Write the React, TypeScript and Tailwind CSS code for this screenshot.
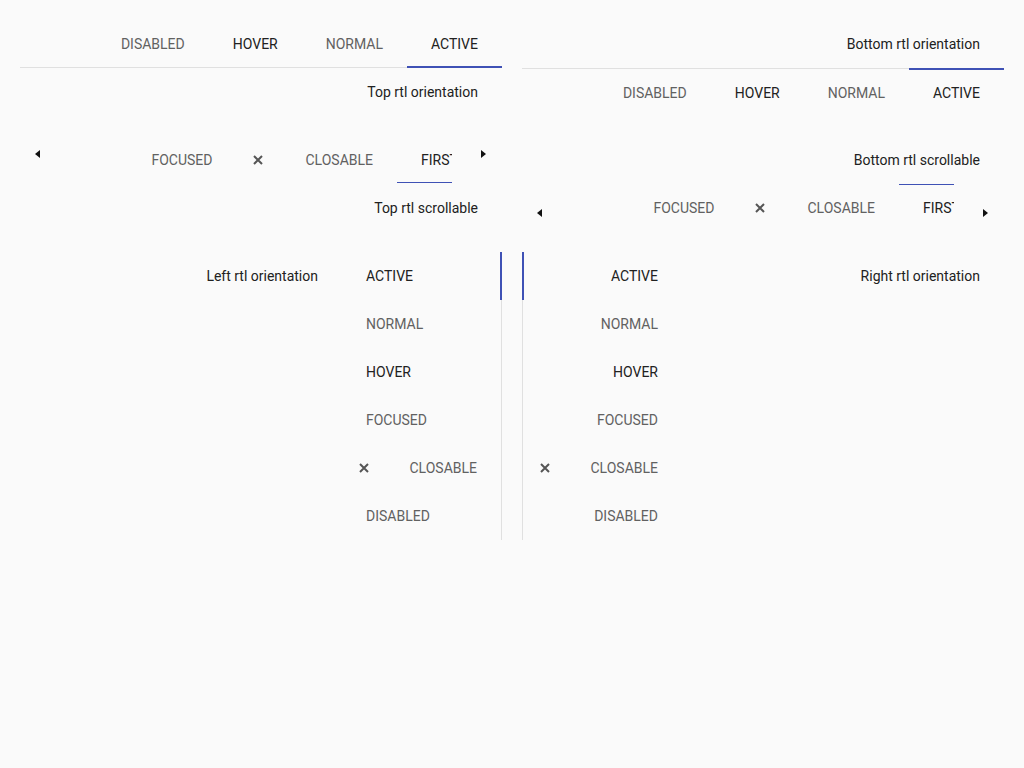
import React from "react";

type Kind = "active" | "hover" | "normal" | "disabled" | "focused";

const colorOf = (k: Kind) =>
  k === "active" || k === "hover" ? "text-[#212121]" : "text-[#616161]";

const X = () => (
  <svg width="10" height="10" viewBox="0 0 10 10" className="shrink-0">
    <path d="M1 1 L9 9 M9 1 L1 9" stroke="#555" strokeWidth="2" strokeLinecap="butt" />
  </svg>
);

const LeftArrow = () => (
  <svg width="5" height="8" viewBox="0 0 5 8">
    <polygon points="5,0 5,8 0,4" fill="#111" />
  </svg>
);
const RightArrow = () => (
  <svg width="5" height="8" viewBox="0 0 5 8">
    <polygon points="0,0 0,8 5,4" fill="#111" />
  </svg>
);

const Label = ({ children }: { children: React.ReactNode }) => (
  <div className="h-12 flex items-center justify-end pr-6 text-sm text-[#212121]">{children}</div>
);

const HTab = ({ label, kind, pos }: { label: string; kind: Kind; pos: "top" | "bottom" }) => (
  <div className={`relative h-full px-6 flex items-center text-sm uppercase ${colorOf(kind)}`}>
    {label}
    {kind === "active" && (
      <div
        className={`absolute left-0 right-0 h-[2px] bg-[#3f51b5] ${pos === "top" ? "bottom-[-1px]" : "top-[-1px]"}`}
      />
    )}
  </div>
);

const horizontalTabs: [string, Kind][] = [
  ["Disabled", "disabled"],
  ["Hover", "hover"],
  ["Normal", "normal"],
  ["Active", "active"],
];

const TopFixed = () => (
  <div className="flex flex-col">
    <div className="h-12 flex justify-end border-b border-[#e0e0e0]">
      {horizontalTabs.map(([l, k]) => (
        <HTab key={l} label={l} kind={k} pos="top" />
      ))}
    </div>
    <Label>Top rtl orientation</Label>
  </div>
);

const BottomFixed = () => (
  <div className="flex flex-col">
    <Label>Bottom rtl orientation</Label>
    <div className="h-12 flex justify-end border-t border-[#e0e0e0]">
      {horizontalTabs.map(([l, k]) => (
        <HTab key={l} label={l} kind={k} pos="bottom" />
      ))}
    </div>
  </div>
);

const ScrollBar = ({ pos }: { pos: "top" | "bottom" }) => {
  const arrowShift = pos === "top" ? "mt-[-12px]" : "mt-[10px]";
  return (
    <div className="h-12 flex">
      <div className={`w-10 flex items-center pl-[15px] ${arrowShift}`}>
        <LeftArrow />
      </div>
      <div className="flex-1 overflow-hidden flex justify-end">
        <div className="h-full px-6 flex items-center text-sm text-[#616161]">FOCUSED</div>
        <div className="h-full pl-[17px] pr-6 flex items-center text-sm text-[#616161]">
          <X />
          <span className="ml-[42px]">CLOSABLE</span>
        </div>
        <div className="relative h-full w-[55px] overflow-hidden flex items-center pl-6 text-sm text-[#212121] whitespace-nowrap">
          FIRST
          <div
            className={`absolute left-0 right-0 h-px bg-[#3f51b5] ${pos === "top" ? "bottom-[1px]" : "top-0"}`}
          />
        </div>
      </div>
      <div className={`w-[50px] flex items-center pl-[29px] ${arrowShift}`}>
        <RightArrow />
      </div>
    </div>
  );
};

const verticalTabs: [string, Kind][] = [
  ["Active", "active"],
  ["Normal", "normal"],
  ["Hover", "hover"],
  ["Focused", "focused"],
  ["Closable", "normal"],
  ["Disabled", "disabled"],
];

const VTabs = ({ side }: { side: "left" | "right" }) => (
  <div
    className={`w-40 shrink-0 flex flex-col ${side === "left" ? "border-r" : "border-l"} border-[#e0e0e0]`}
  >
    {verticalTabs.map(([l, k]) => (
      <div
        key={l}
        className={`relative h-12 flex items-center text-sm uppercase ${colorOf(k)} ${
          l === "Closable"
            ? "pl-[17px] pr-6 justify-between"
            : side === "left"
            ? "pl-6 justify-start"
            : "pr-6 justify-end"
        }`}
      >
        {l === "Closable" ? (
          <>
            <X />
            <span>{l}</span>
          </>
        ) : (
          l
        )}
        {k === "active" && (
          <div
            className={`absolute top-0 bottom-0 w-[2px] bg-[#3f51b5] ${
              side === "left" ? "right-[-1px]" : "left-[-1px]"
            }`}
          />
        )}
      </div>
    ))}
  </div>
);

export default function App() {
  return (
    <div
      className="min-h-screen bg-[#fafafa] p-5"
      style={{ fontFamily: "Roboto, 'Liberation Sans', sans-serif" }}
    >
      <div className="grid grid-cols-2 gap-5">
        <TopFixed />
        <BottomFixed />
        <div className="flex flex-col">
          <ScrollBar pos="top" />
          <Label>Top rtl scrollable</Label>
        </div>
        <div className="flex flex-col">
          <Label>Bottom rtl scrollable</Label>
          <ScrollBar pos="bottom" />
        </div>
        <div className="flex justify-end">
          <div className="flex-1">
            <Label>Left rtl orientation</Label>
          </div>
          <VTabs side="left" />
        </div>
        <div className="flex">
          <VTabs side="right" />
          <div className="flex-1">
            <Label>Right rtl orientation</Label>
          </div>
        </div>
      </div>
    </div>
  );
}
